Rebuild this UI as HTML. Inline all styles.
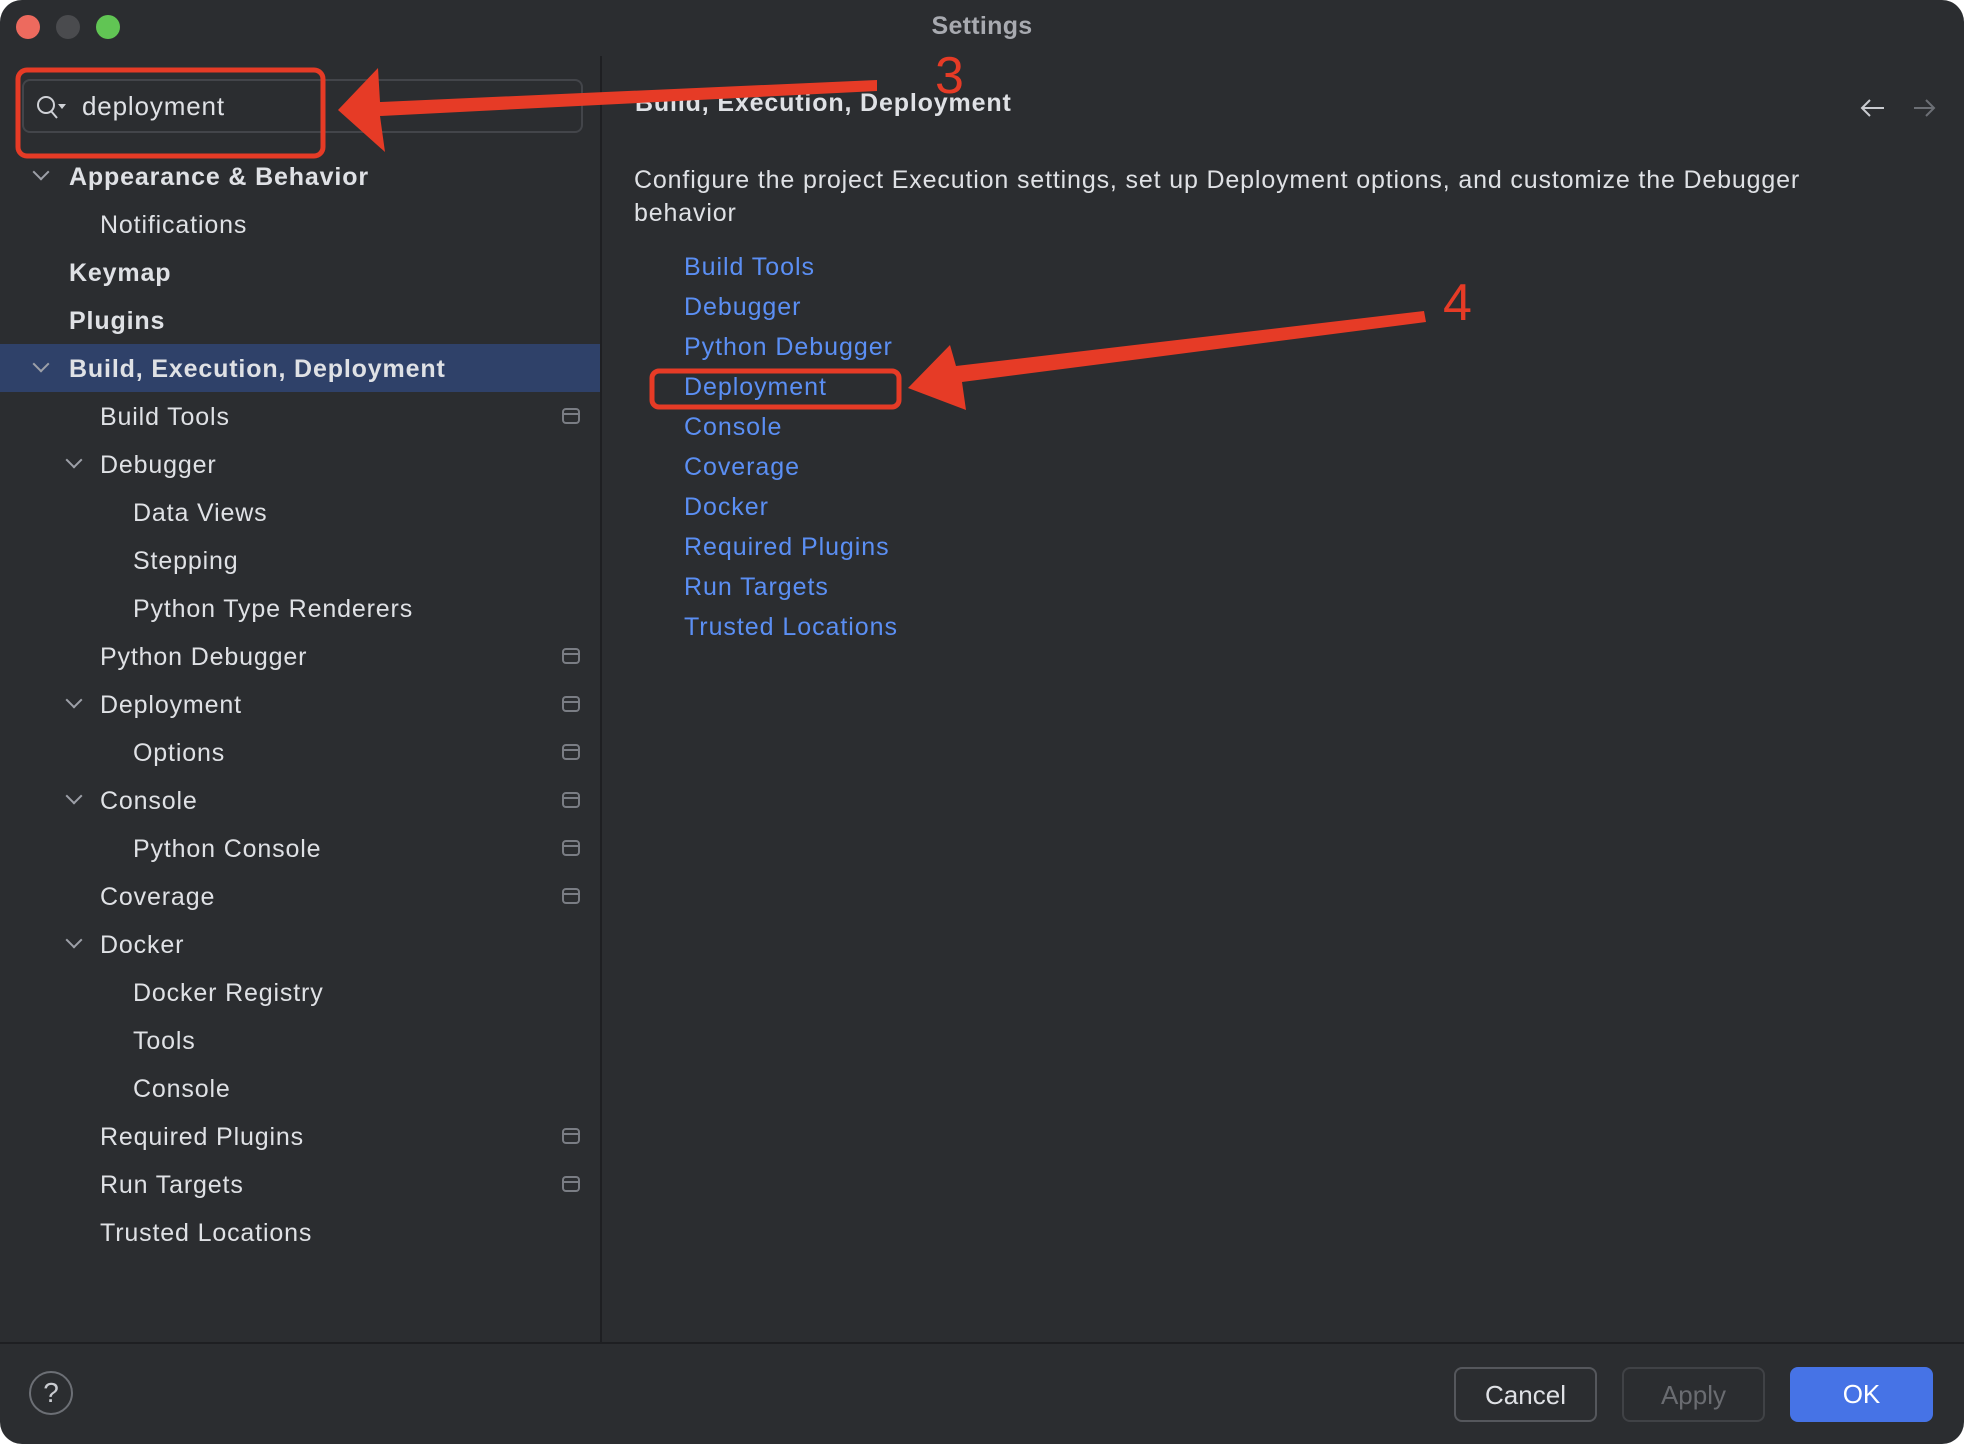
<!DOCTYPE html>
<html><head><meta charset="utf-8"><style>
*{margin:0;padding:0;box-sizing:border-box}
body{width:1964px;height:1444px;background:#fff;font-family:"Liberation Sans",sans-serif;overflow:hidden;position:relative}
.win{position:absolute;left:0;top:0;width:1964px;height:1444px;background:#2b2d30;border-radius:22px;overflow:hidden}
.abs{position:absolute;white-space:nowrap}
.t{position:absolute;color:#dfe1e5;font-size:25px;white-space:nowrap;line-height:30px;letter-spacing:0.85px}
.b{font-weight:bold}
.chev{position:absolute;width:12px;height:12px;border-right:2px solid #9da0a8;border-bottom:2px solid #9da0a8;transform:rotate(45deg)}
.ic{position:absolute;left:562px;width:18px;height:16px;border:2px solid #7a7d84;border-radius:4px}
.ic:after{content:"";position:absolute;left:0;right:0;top:3px;border-top:2px solid #7a7d84}
.lk{position:absolute;left:684px;color:#5b8ff4;font-size:25px;line-height:30px;white-space:nowrap;letter-spacing:0.95px}
.btn{position:absolute;top:1367px;width:143px;height:55px;border-radius:8px;font-size:26px;text-align:center;line-height:53px}
</style></head><body>
<div class="win">
<div class="abs" style="left:16px;top:15px;width:24px;height:24px;border-radius:50%;background:#ed6a5e"></div>
<div class="abs" style="left:56px;top:15px;width:24px;height:24px;border-radius:50%;background:#4a4b4e"></div>
<div class="abs" style="left:96px;top:15px;width:24px;height:24px;border-radius:50%;background:#61c554"></div>
<div class="t b" style="left:0;width:1964px;text-align:center;top:11px;color:#a8aab0;letter-spacing:0.3px">Settings</div>
<div class="abs" style="left:600px;top:56px;width:2px;height:1287px;background:#1e1f22"></div>
<div class="abs" style="left:0;top:1342px;width:1964px;height:2px;background:#1e1f22"></div>
<div class="abs" style="left:22px;top:79px;width:561px;height:54px;border:2px solid #43454a;border-radius:8px"></div>
<svg class="abs" style="left:34px;top:94px" width="36" height="30"><circle cx="12" cy="11" r="8" fill="none" stroke="#cfd1d6" stroke-width="2"/><line x1="17" y1="17" x2="23" y2="24" stroke="#cfd1d6" stroke-width="2"/><path d="M24 10 L32 10 L28 15Z" fill="#cfd1d6"/></svg>
<div class="t" style="left:82px;top:91px;font-size:26px">deployment</div>
<div class="abs" style="left:0;top:344px;width:600px;height:48px;background:#2f4169"></div>
<div class="chev" style="left:35px;top:166px"></div>
<div class="t b" style="left:69px;top:162px">Appearance &amp; Behavior</div>
<div class="t" style="left:100px;top:210px">Notifications</div>
<div class="t b" style="left:69px;top:258px">Keymap</div>
<div class="t b" style="left:69px;top:306px">Plugins</div>
<div class="chev" style="left:35px;top:358px"></div>
<div class="t b" style="left:69px;top:354px">Build, Execution, Deployment</div>
<div class="t" style="left:100px;top:402px">Build Tools</div><div class="ic" style="top:408px"></div>
<div class="chev" style="left:68px;top:454px"></div>
<div class="t" style="left:100px;top:450px">Debugger</div>
<div class="t" style="left:133px;top:498px">Data Views</div>
<div class="t" style="left:133px;top:546px">Stepping</div>
<div class="t" style="left:133px;top:594px">Python Type Renderers</div>
<div class="t" style="left:100px;top:642px">Python Debugger</div><div class="ic" style="top:648px"></div>
<div class="chev" style="left:68px;top:694px"></div>
<div class="t" style="left:100px;top:690px">Deployment</div><div class="ic" style="top:696px"></div>
<div class="t" style="left:133px;top:738px">Options</div><div class="ic" style="top:744px"></div>
<div class="chev" style="left:68px;top:790px"></div>
<div class="t" style="left:100px;top:786px">Console</div><div class="ic" style="top:792px"></div>
<div class="t" style="left:133px;top:834px">Python Console</div><div class="ic" style="top:840px"></div>
<div class="t" style="left:100px;top:882px">Coverage</div><div class="ic" style="top:888px"></div>
<div class="chev" style="left:68px;top:934px"></div>
<div class="t" style="left:100px;top:930px">Docker</div>
<div class="t" style="left:133px;top:978px">Docker Registry</div>
<div class="t" style="left:133px;top:1026px">Tools</div>
<div class="t" style="left:133px;top:1074px">Console</div>
<div class="t" style="left:100px;top:1122px">Required Plugins</div><div class="ic" style="top:1128px"></div>
<div class="t" style="left:100px;top:1170px">Run Targets</div><div class="ic" style="top:1176px"></div>
<div class="t" style="left:100px;top:1218px">Trusted Locations</div>
<div class="t b" style="left:635px;top:88px">Build, Execution, Deployment</div>
<svg class="abs" style="left:1858px;top:96px" width="80" height="24"><path d="M26 12H4M12 4L4 12L12 20" fill="none" stroke="#c9cbd0" stroke-width="2"/><path d="M56 12H76M68 4L76 12L68 20" fill="none" stroke="#6c6f75" stroke-width="2"/></svg>
<div class="t" style="left:634px;top:165px">Configure the project Execution settings, set up Deployment options, and customize the Debugger</div>
<div class="t" style="left:634px;top:198px">behavior</div>
<div class="lk" style="top:252px">Build Tools</div>
<div class="lk" style="top:292px">Debugger</div>
<div class="lk" style="top:332px">Python Debugger</div>
<div class="lk" style="top:372px">Deployment</div>
<div class="lk" style="top:412px">Console</div>
<div class="lk" style="top:452px">Coverage</div>
<div class="lk" style="top:492px">Docker</div>
<div class="lk" style="top:532px">Required Plugins</div>
<div class="lk" style="top:572px">Run Targets</div>
<div class="lk" style="top:612px">Trusted Locations</div>
<div class="abs" style="left:29px;top:1371px;width:44px;height:44px;border:2px solid #6c6f75;border-radius:50%;color:#c9cbd0;font-size:28px;text-align:center;line-height:40px">?</div>
<div class="btn" style="left:1454px;border:2px solid #55575c;color:#dfe1e5">Cancel</div>
<div class="btn" style="left:1622px;border:2px solid #404246;color:#6a6c71">Apply</div>
<div class="btn" style="left:1790px;background:#4673e6;color:#fff;line-height:55px">OK</div>
<svg class="abs" style="left:0;top:0" width="1964" height="1444">
<rect x="18" y="70" width="305" height="86" rx="9" fill="none" stroke="#e63b26" stroke-width="5"/>
<rect x="652" y="371" width="247" height="36" rx="7" fill="none" stroke="#e63b26" stroke-width="5"/>
<path d="M877 80 L877 91 L380 116 L385 152 L338 110 L378 68 L380 102 Z" fill="#e63b26"/>
<path d="M1424 311 L1426 322 L962 382 L966 410 L908 388 L950 345 L956 366 Z" fill="#e63b26"/>
<text x="935" y="93" font-family="Liberation Sans" font-size="52" fill="#e63b26">3</text>
<text x="1443" y="320" font-family="Liberation Sans" font-size="52" fill="#e63b26">4</text>
</svg>
</div>
</body></html>
